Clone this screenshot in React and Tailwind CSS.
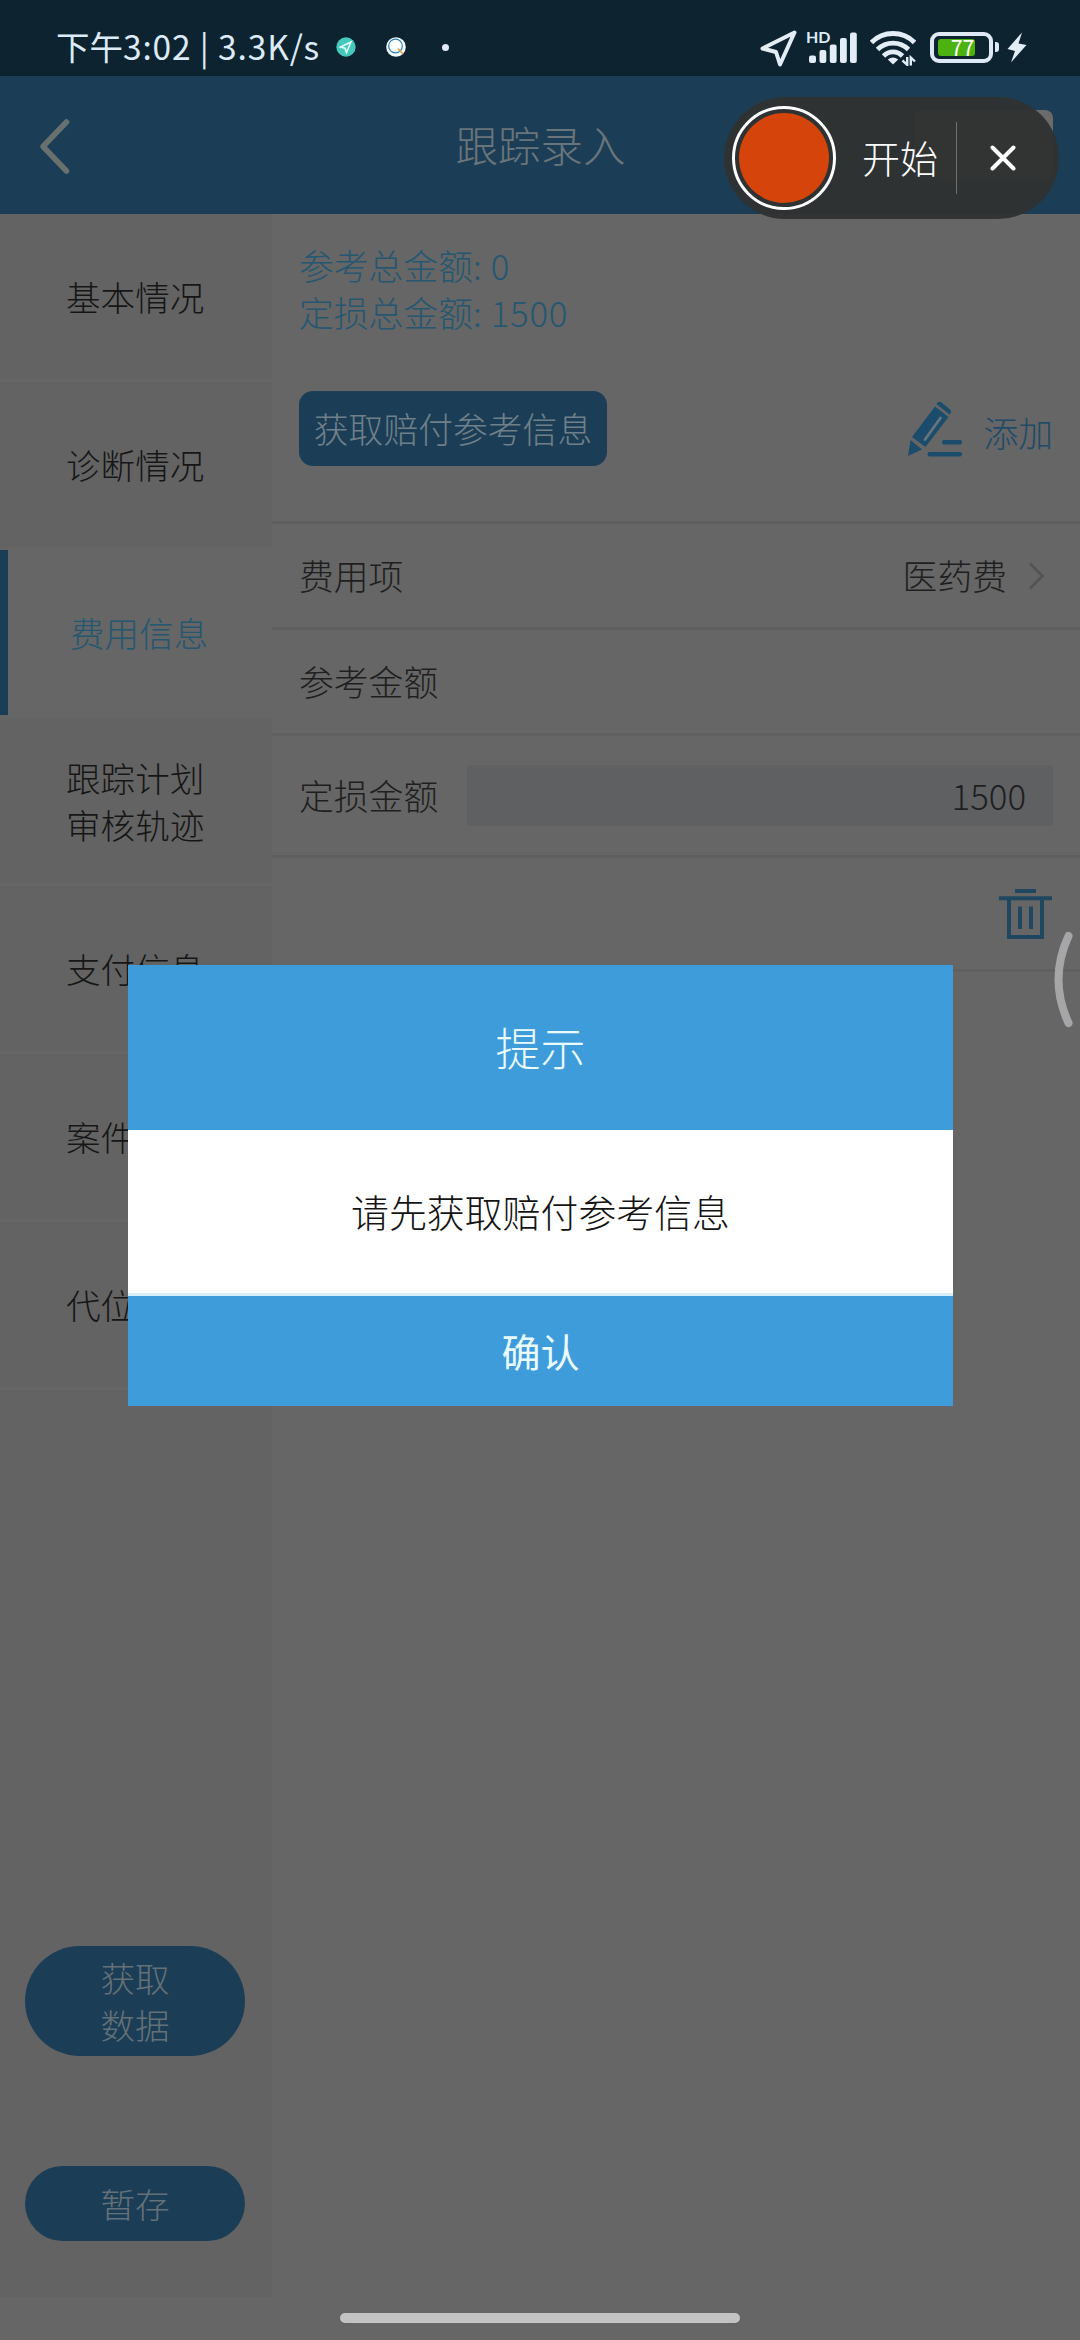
import React from "react";

const navItems = [
  { lines: ["基本情况"] },
  { lines: ["诊断情况"] },
  { lines: ["费用信息"], active: true },
  { lines: ["跟踪计划", "审核轨迹"] },
  { lines: ["支付信息"] },
  { lines: ["案件"] },
  { lines: ["代位"] },
];

function StatusBar() {
  return (
    <div className="flex h-[76px] shrink-0 items-center bg-[#0d232f] pl-[56px] text-[#dcebf7]">
      <span className="mt-[15px] w-[280px] whitespace-nowrap text-[33.5px] leading-[40px] font-normal">
        下午<span className="tracking-[0.85px]">3:02 | 3.3K/s</span>
      </span>
      <svg className="mt-[18px] h-[20px] w-[20px]" viewBox="0 0 20 20">
        <circle cx="10" cy="10" r="9.7" fill="#45c9bd" />
        <path d="M15 5 L4.5 10 L8.8 11.2 L10.5 15.5 Z" fill="none" stroke="#e8fffb" strokeWidth="1.5" />
      </svg>
      <svg className="mt-[18px] ml-[30px] h-[20px] w-[20px]" viewBox="0 0 20 20">
        <circle cx="10" cy="10" r="9.8" fill="#f4fbff" />
        <circle cx="9.5" cy="9" r="6.8" fill="#fff" stroke="#2c83bb" strokeWidth="1.2" />
        <path d="M12 11.5 L17 17" stroke="#e9a04a" strokeWidth="1.8" />
      </svg>
      <span className="mt-[18px] ml-[36px] h-[7px] w-[7px] rounded-full bg-[#dcebf7]" />
      <svg className="ml-[311px] mt-[21px] h-[37px] w-[37px]" viewBox="0 0 37 37" fill="none" stroke="#e3edf6" strokeWidth="4" strokeLinejoin="round">
        <path d="M34.5 2.5 L2.5 18.5 L16 22 L20 34.5 Z" />
      </svg>
      <div className="relative ml-[9px] mt-[18px] h-[34px] w-[52px]">
        <svg className="h-[34px] w-[52px]" viewBox="0 0 52 34" fill="#e3edf6">
          <rect x="3" y="25.5" width="7" height="7.5" rx="2" />
          <rect x="13.5" y="20" width="6.8" height="13" rx="2" />
          <rect x="23.8" y="14.5" width="6.8" height="18.5" rx="2" />
          <rect x="34" y="8" width="6.8" height="25" rx="2" />
          <rect x="44" y="2.5" width="6.8" height="30.5" rx="2" />
        </svg>
        <span className="absolute left-[0px] top-[-4px] font-['Lato',sans-serif] text-[16px] leading-[22px] font-bold">HD</span>
      </div>
      <svg className="ml-[12px] mt-[20px] h-[36px] w-[46px]" viewBox="0 0 46 36" fill="none" stroke="#e3edf6" strokeWidth="4.8">
        <path d="M1.5 12.5 C13 0.5 33 0.5 44.5 12.5" />
        <path d="M7.5 19.5 C16 11 30 11 38.5 19.5" />
        <path d="M13.5 26 C19 20.5 27 20.5 32.5 26" />
        <path d="M17.8 29.5 Q23 25.5 28.2 29.5 L23 34.5 Z" fill="#e3edf6" stroke="none" />
        <path d="M37.2 27 V34.8 L32.5 30.5 M40.8 35.5 V27.5 L45 31.5" strokeWidth="2.4" />
      </svg>
      <div className="ml-[14px] mt-[18px] flex h-[31px] w-[63px] items-center rounded-[9px] border-4 border-[#dfe8f5] pl-[3.5px]">
        <div className="flex h-[17px] w-[37px] items-center justify-end rounded-[3px] bg-[#4cb20f] text-[21.5px] leading-none text-white">77</div>
      </div>
      <span className="ml-[2px] mt-[18px] h-[10px] w-[4px] rounded-r-[3px] bg-[#dfe8f5]" />
      <svg className="ml-[8px] mt-[19px] h-[31px] w-[20px]" viewBox="0 0 20 31" fill="#e3edf6">
        <path d="M15 0.5 L0.5 17 L8 19 L4 30.5 L19.5 13 L11.5 11.5 Z" />
      </svg>
    </div>
  );
}

function Header() {
  return (
    <div className="relative flex h-[138px] shrink-0 items-center justify-center bg-[#1b3e56]">
      <svg className="absolute left-[38px] top-[41px] h-[58px] w-[34px]" viewBox="0 0 34 58" fill="none" stroke="#69716f" strokeWidth="5.5" strokeLinecap="round" strokeLinejoin="round">
        <path d="M28.5 5 L5 29.5 L28.5 54" />
      </svg>
      <span className="mb-[2px] ml-[1px] text-[42.5px] leading-[60px] font-light text-[#6a757b]">跟踪录入</span>
      <div className="absolute right-[27px] top-[34px] h-[70px] w-[139px] rounded-[8px] bg-[#6b6b6b]" />
    </div>
  );
}

function Sidebar() {
  return (
    <div className="flex h-[2083px] w-[272px] shrink-0 flex-col bg-[#636363]">
      {navItems.map((item) => (
        <div key={item.lines[0]} className="h-[168px] border-b-[3px] border-[#666666]">
          <div
            className={
              item.active
                ? "flex h-full flex-col justify-center border-l-8 border-[#1b3e56] bg-[#666666] pl-[62px] text-[#255770]"
                : "flex h-full flex-col justify-center pl-[66px] text-[#161616]"
            }
          >
            {item.lines.map((line) => (
              <span key={line} className="text-[34.6px] leading-[47px] font-light">{line}</span>
            ))}
          </div>
        </div>
      ))}
      <div className="mt-auto mb-[56px] flex flex-col items-center gap-[110px] pr-[2px] text-[34.6px] leading-[47px] font-light text-[#647178]">
        <div className="flex h-[110px] w-[220px] flex-col items-center justify-center rounded-[55px] bg-[#1b3e56]">
          <span>获取</span>
          <span>数据</span>
        </div>
        <div className="flex h-[75px] w-[220px] items-center justify-center rounded-[38px] bg-[#1b3e56]">暂存</div>
      </div>
    </div>
  );
}

function Content() {
  return (
    <div className="flex min-w-0 flex-1 flex-col text-[34.8px] leading-[47px] font-light text-[#1f1f1f]">
      <div className="h-[310px] border-b-[3px] border-[#5f5f5f] pl-[27px] pt-[28px]">
        <p className="text-[#255770]">参考总金额<span className="tracking-[0.7px]">: 0</span></p>
        <p className="text-[#255770]">定损总金额<span className="tracking-[0.7px]">: 1500</span></p>
        <div className="mt-[55px] flex items-start pr-[27px]">
          <div className="flex h-[75px] w-[308px] items-center justify-center rounded-[14px] bg-[#1b3e56] text-[#70808a]">
            <span className="whitespace-nowrap">获取赔付参考信息</span>
          </div>
          <svg className="ml-auto mt-[10px] h-[56px] w-[56px]" viewBox="0 0 56 56" fill="#1b4c6c">
            <path d="M28 5.5 L41.5 16 L18.5 46 L5 36 Z" />
            <path d="M29.5 3 Q31.5 -0.5 34.5 1.5 L43 8.5 Q45.5 10.5 42.5 13.5 Z" />
            <path d="M3.5 39 L15 48.5 L1 55 Z" />
            <path d="M33.5 17 L18 38.5" stroke="#66747c" strokeWidth="2.8" strokeLinecap="round" />
            <rect x="35" y="39" width="20" height="4.5" rx="2" />
            <rect x="20.5" y="51" width="34.5" height="4.5" rx="2" />
          </svg>
          <span className="ml-[20px] mt-[18px] text-[#1f4b66]">添加</span>
        </div>
      </div>
      <div className="flex h-[106px] items-center border-b-[3px] border-[#5f5f5f] pl-[27px] pr-[35px]">
        <span>费用项</span>
        <span className="ml-auto">医药费</span>
        <svg className="ml-[21px] h-[28px] w-[17px]" viewBox="0 0 17 28" fill="none" stroke="#535353" strokeWidth="2.6">
          <path d="M2 1.5 L14.5 14 L2 26.5" />
        </svg>
      </div>
      <div className="flex h-[106px] items-center border-b-[3px] border-[#5f5f5f] pl-[27px]">参考金额</div>
      <div className="flex h-[122px] items-center border-b-[3px] border-[#5f5f5f] pl-[27px] pr-[27px]">
        <span>定损金额</span>
        <div className="ml-auto flex h-[61px] w-[586px] items-center justify-end rounded-[4px] bg-[#5f6062] pr-[27px]">1500</div>
      </div>
      <div className="flex h-[114px] justify-end border-b-[3px] border-[#606060] pr-[28px] pt-[30px]">
        <svg className="h-[53px] w-[53px]" viewBox="0 0 53 53" fill="none" stroke="#1f4860" strokeWidth="4">
          <path d="M16 3 H37 M0 10.3 H53 M10 10 V49 H43 V10 M21 18.5 V41 M32 18.5 V41" />
        </svg>
      </div>
    </div>
  );
}

function Modal() {
  return (
    <div className="absolute left-[128px] top-[965px] flex h-[441px] w-[825px] flex-col bg-white text-center">
      <div className="flex h-[165px] items-center justify-center bg-[#3f9cdb] pb-[2px] text-[45px] leading-none font-light text-[#e9fbff]">提示</div>
      <div className="flex h-[166px] items-center justify-center border-b-[3px] border-[#d8eefa] pb-[2px] text-[37.9px] leading-none font-light text-[#141414]">请先获取赔付参考信息</div>
      <div className="flex flex-1 items-center justify-center bg-[#3f9cdb] pb-[2px] text-[39px] leading-none font-normal text-[#e9fbff]">确认</div>
    </div>
  );
}

function RecorderPill() {
  return (
    <div className="absolute left-[724px] top-[97px] flex h-[122px] w-[335px] items-center rounded-[61px] bg-[#313232]/97 pl-[8px] text-white">
      <div className="flex h-[104px] w-[104px] items-center justify-center rounded-full border-[3px] border-white">
        <div className="h-[90px] w-[90px] rounded-full bg-[#d5440b]" />
      </div>
      <span className="mb-[2px] ml-[26px] text-[38px] leading-none font-light">开始</span>
      <span className="ml-[18px] h-[72px] w-px bg-[#70706e]" />
      <svg className="ml-[33px] h-[26px] w-[26px]" viewBox="0 0 26 26" stroke="white" strokeWidth="4" strokeLinecap="round">
        <path d="M2.5 2.5 L23.5 23.5 M23.5 2.5 L2.5 23.5" />
      </svg>
    </div>
  );
}

export default function App() {
  return (
    <div className="relative flex h-[2340px] w-[1080px] flex-col overflow-hidden bg-[#666666] font-['Noto_Sans_CJK_SC',sans-serif]">
      <StatusBar />
      <Header />
      <div className="flex">
        <Sidebar />
        <Content />
      </div>
      <Modal />
      <RecorderPill />
      <svg className="absolute left-[1050px] top-[930px] h-[99px] w-[26px]" viewBox="0 0 26 99" fill="none" stroke="#a6a6a8" strokeWidth="8" strokeLinecap="round">
        <path d="M18.5 6 Q-1.5 49.5 18.5 93" />
      </svg>
      <div className="absolute left-[340px] top-[2313px] h-[10px] w-[400px] rounded-full bg-[#c4c4c4]" />
    </div>
  );
}
